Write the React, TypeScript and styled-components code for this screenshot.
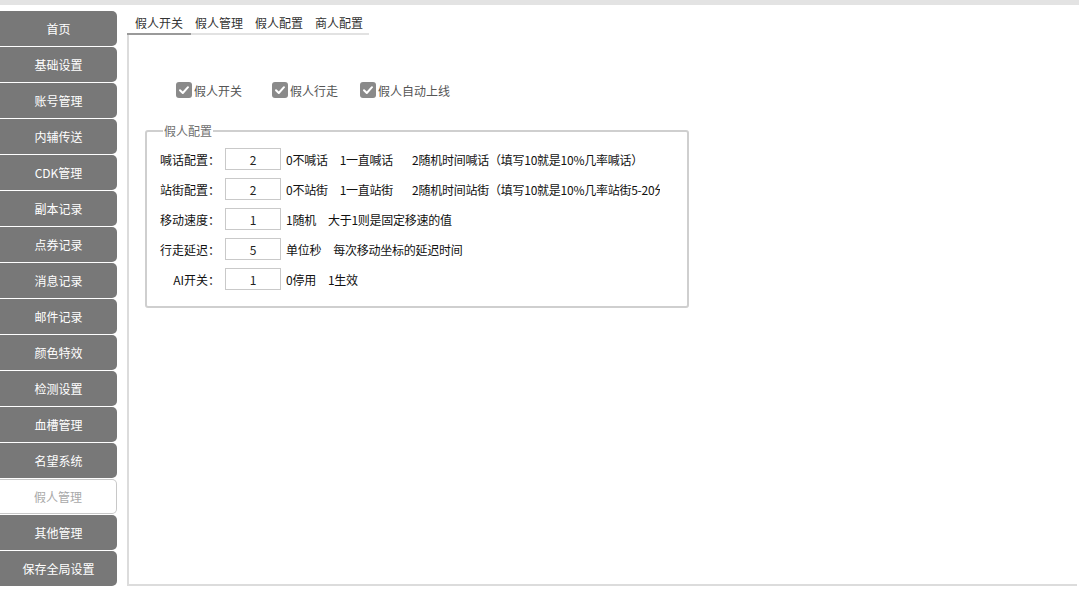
import React from "react";
import styled, { createGlobalStyle } from "styled-components";

const Global = createGlobalStyle`
  html, body { margin: 0; padding: 0; background: #fff; }
  body { font-family: "Noto Sans CJK SC", "Noto Sans", sans-serif; font-size: 12px; color: #222; }
  * { box-sizing: border-box; }
`;

const Page = styled.div`
  width: 1079px;
  height: 605px;
  display: flex;
  flex-direction: column;
  overflow: hidden;
`;

const TopBar = styled.div`
  height: 5px;
  background: #e3e3e3;
  flex: none;
`;

const Main = styled.div`
  display: flex;
  flex: 1;
`;

const Sidebar = styled.nav`
  width: 117px;
  flex: none;
  padding-top: 6px;
  display: flex;
  flex-direction: column;
  gap: 1px;
`;

const NavButton = styled.div<{ $active?: boolean }>`
  height: 35px;
  display: flex;
  align-items: center;
  justify-content: center;
  padding-bottom: 1px;
  border-radius: 0 5px 5px 0;
  background: ${(p) => (p.$active ? "#fff" : "#787878")};
  color: ${(p) => (p.$active ? "#a9a9a9" : "#fff")};
  border: ${(p) => (p.$active ? "1px solid #c8c8c8" : "none")};
  border-left: none;
  font-size: 12px;
`;

const Content = styled.div`
  flex: 1;
  margin-left: 10px;
  margin-right: 2px;
  padding-top: 9px;
  display: flex;
  flex-direction: column;
`;

const TabStrip = styled.div`
  display: flex;
  align-self: flex-start;
  border-bottom: 2px solid #e2e2e2;
  height: 21px;
`;

const Tab = styled.div<{ $active?: boolean; $first?: boolean; $last?: boolean }>`
  height: 21px;
  padding: 0 ${(p) => (p.$last ? 6 : 8)}px 0 ${(p) => (p.$first ? 8 : 4)}px;
  line-height: 18px;
  font-size: 12px;
  color: #333;
  border-bottom: 2px solid ${(p) => (p.$active ? "#9a9a9a" : "transparent")};
  margin-bottom: -2px;
`;

const Panel = styled.div`
  flex: 1;
  border-left: 2px solid #dcdcdc;
  border-bottom: 2px solid #dcdcdc;
  margin-bottom: 19px;
  padding: 46px 0 0 16px;
`;

const CheckRow = styled.div`
  display: flex;
  padding-left: 31px;
  height: 18px;
  align-items: center;
`;

const CheckItem = styled.label<{ $w: number }>`
  display: flex;
  align-items: center;
  width: ${(p) => p.$w}px;
  color: #555;
  font-size: 12px;
`;

const Box = styled.span`
  width: 16px;
  height: 16px;
  border-radius: 3px;
  background: #8a8a8a;
  display: inline-flex;
  align-items: center;
  justify-content: center;
  margin-right: 2px;
`;

const Fieldset = styled.fieldset`
  margin: 25px 0 0 0;
  width: 544px;
  height: 184px;
  border: 2px solid #cfcfcf;
  border-radius: 3px;
  padding: 6px 0 0 13px;
`;

const Legend = styled.legend`
  margin-left: 3px;
  padding: 0 1px;
  color: #6e6e6e;
  font-size: 12px;
  line-height: 14px;
`;

const Row = styled.div`
  display: flex;
  align-items: center;
  height: 30px;
`;

const Label = styled.span`
  width: 60px;
  text-align: right;
  color: #111;
  font-size: 12px;
  white-space: nowrap;
`;

const Input = styled.div`
  width: 56px;
  height: 22px;
  margin-left: 5px;
  border: 1px solid #c9c9c9;
  display: flex;
  align-items: center;
  justify-content: center;
  color: #222;
  font-size: 12px;
`;

const Desc = styled.span`
  margin-left: 5px;
  max-width: 374px;
  overflow: hidden;
  white-space: nowrap;
  display: flex;
  color: #111;
  font-size: 12px;
  letter-spacing: -0.25px;
`;

const Part = styled.span<{ $gap: number }>`
  margin-left: ${(p) => p.$gap}px;
  flex: none;
`;

const Check = () => (
  <svg width="12" height="12" viewBox="0 0 12 12">
    <path d="M2 6.2 L4.8 9 L10 3.2" fill="none" stroke="#fff" strokeWidth="2" strokeLinecap="round" strokeLinejoin="round" />
  </svg>
);

const nav = [
  "首页", "基础设置", "账号管理", "内辅传送", "CDK管理", "副本记录", "点券记录", "消息记录",
  "邮件记录", "颜色特效", "检测设置", "血槽管理", "名望系统", "假人管理", "其他管理", "保存全局设置",
];

const rows: { label: string; value: string; parts: [string, number][] }[] = [
  { label: "喊话配置：", value: "2", parts: [["0不喊话", 0], ["1一直喊话", 12], ["2随机时间喊话（填写10就是10%几率喊话）", 19]] },
  { label: "站街配置：", value: "2", parts: [["0不站街", 0], ["1一直站街", 12], ["2随机时间站街（填写10就是10%几率站街5-20分钟）", 19]] },
  { label: "移动速度：", value: "1", parts: [["1随机", 0], ["大于1则是固定移速的值", 12]] },
  { label: "行走延迟：", value: "5", parts: [["单位秒", 0], ["每次移动坐标的延迟时间", 12]] },
  { label: "AI开关：", value: "1", parts: [["0停用", 0], ["1生效", 12]] },
];

export default function App() {
  return (
    <Page>
      <Global />
      <TopBar />
      <Main>
        <Sidebar>
          {nav.map((n) => (
            <NavButton key={n} $active={n === "假人管理"}>{n}</NavButton>
          ))}
        </Sidebar>
        <Content>
          <TabStrip>
            <Tab $active $first>假人开关</Tab>
            <Tab>假人管理</Tab>
            <Tab>假人配置</Tab>
            <Tab $last>商人配置</Tab>
          </TabStrip>
          <Panel>
            <CheckRow>
              <CheckItem $w={96}><Box><Check /></Box>假人开关</CheckItem>
              <CheckItem $w={88}><Box><Check /></Box>假人行走</CheckItem>
              <CheckItem $w={120}><Box><Check /></Box>假人自动上线</CheckItem>
            </CheckRow>
            <Fieldset>
              <Legend>假人配置</Legend>
              {rows.map((r) => (
                <Row key={r.label}>
                  <Label>{r.label}</Label>
                  <Input>{r.value}</Input>
                  <Desc>
                    {r.parts.map(([t, g]) => (
                      <Part key={t} $gap={g}>{t}</Part>
                    ))}
                  </Desc>
                </Row>
              ))}
            </Fieldset>
          </Panel>
        </Content>
      </Main>
    </Page>
  );
}
